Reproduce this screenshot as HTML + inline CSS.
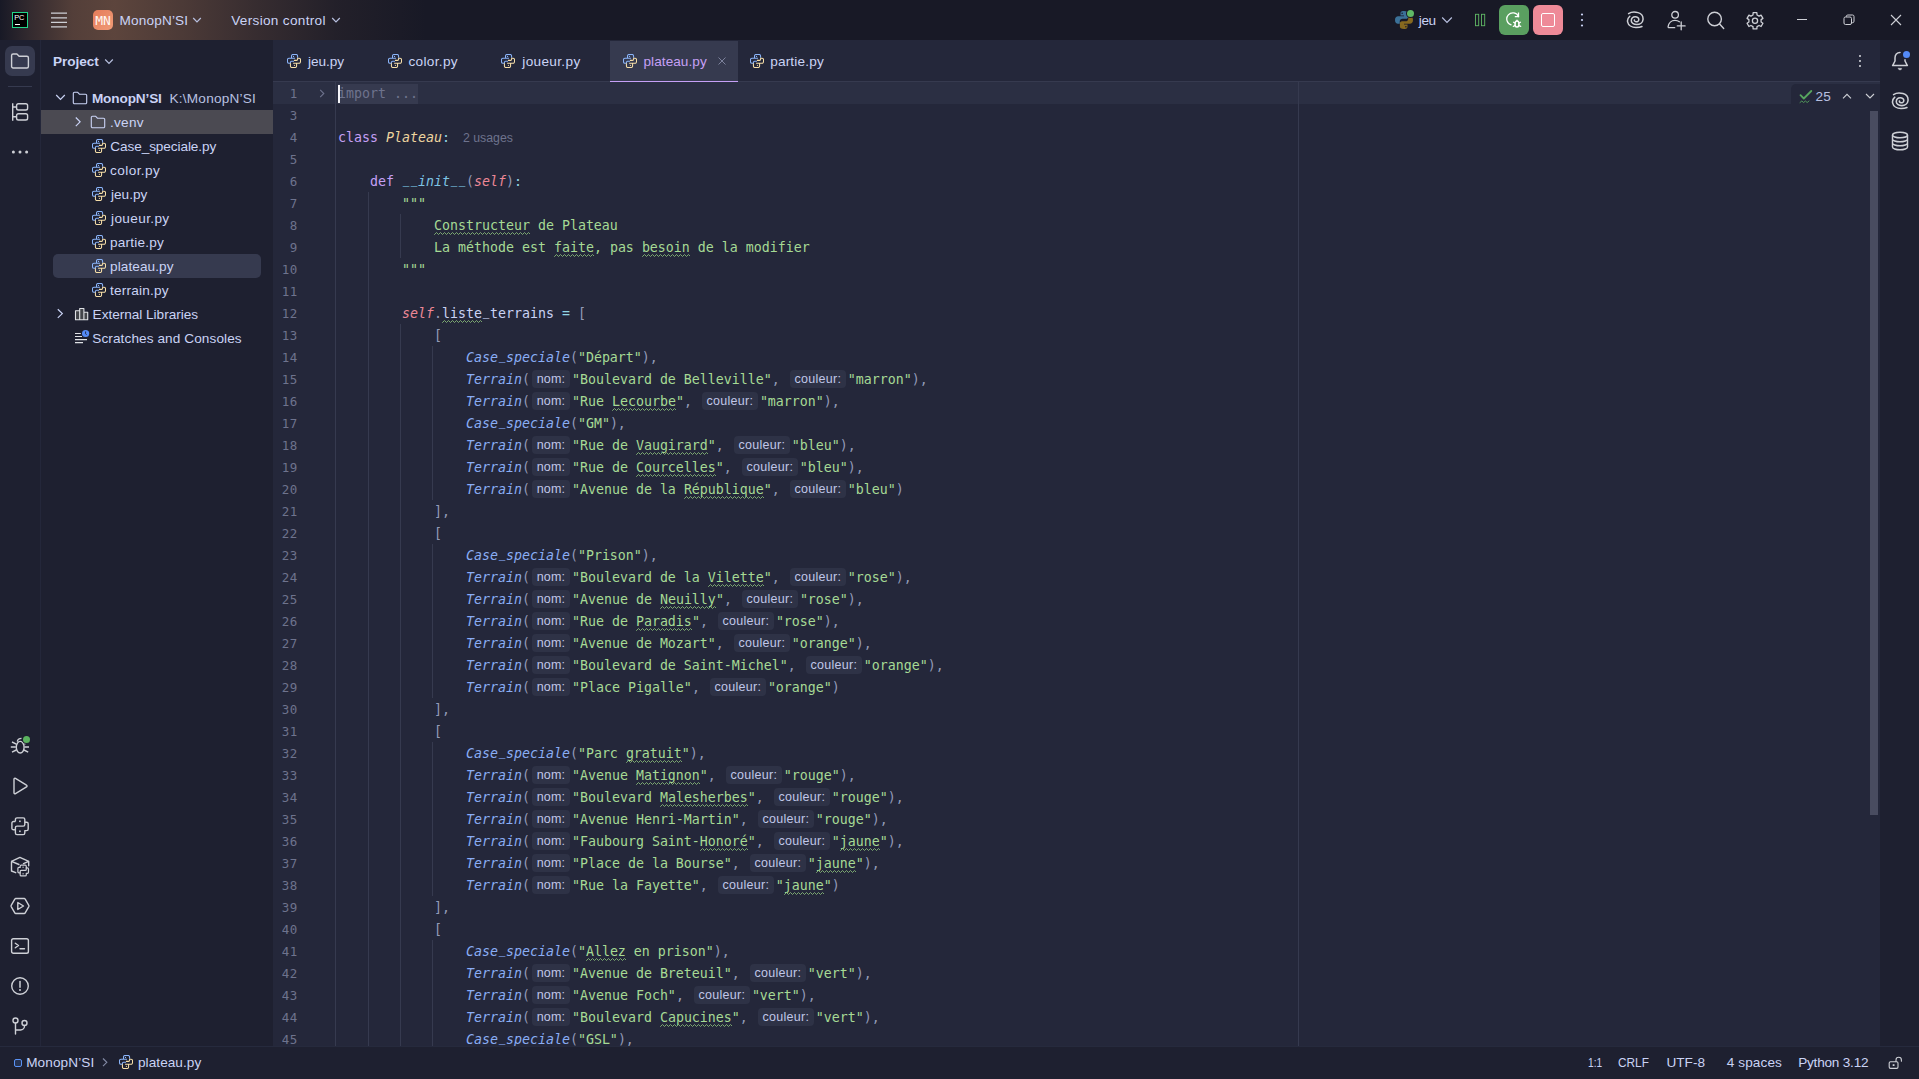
<!DOCTYPE html>
<html lang="fr"><head><meta charset="utf-8"><title>MonopN'SI – plateau.py</title>
<style>
*{box-sizing:border-box;margin:0;padding:0}
html,body{width:1919px;height:1079px;overflow:hidden;background:#24273a}
body{position:relative;font-family:"Liberation Sans",sans-serif;color:#cad3f5;font-size:13.5px}
.abs,.ic,.tx{position:absolute}
.tx{white-space:nowrap;line-height:24px;color:#cad3f5;padding-top:1px}
#title{position:absolute;left:0;top:0;width:1919px;height:40px;background:#181926}
#title .glow{position:absolute;left:0;top:0;width:520px;height:40px;background:linear-gradient(90deg,rgba(98,72,62,0) 0,rgba(98,72,62,.38) 6%,rgba(98,72,62,.8) 14%,rgba(98,72,62,.93) 22%,rgba(98,72,62,.7) 35%,rgba(98,72,62,.4) 50%,rgba(98,72,62,.14) 65%,rgba(98,72,62,0) 82%)}
#lstrip{position:absolute;left:0;top:40px;width:41px;height:1007px;background:#1e2030;border-right:1px solid #24273a}
#proj{position:absolute;left:41px;top:40px;width:232px;height:1007px;background:#1e2030}
#rstrip{position:absolute;left:1880px;top:40px;width:39px;height:1007px;background:#1e2030}
#status{position:absolute;left:0;top:1047px;width:1919px;height:32px;background:#1e2030}
#editor{position:absolute;left:273px;top:40px;width:1607px;height:1007px;background:#24273a}
#tabline{position:absolute;left:273px;top:81px;width:1607px;height:1px;background:#363a4f}
#code{position:absolute;left:273px;top:82px;width:1607px;height:965px;overflow:hidden;font-family:"DejaVu Sans Mono","Liberation Mono",monospace;font-size:13.29px}
.ln{position:absolute;left:0;width:1607px;height:22px;line-height:22px;white-space:pre}
.ln.cur{background:#2b2f43}
.no{position:absolute;left:1px;top:1px;width:23.7px;text-align:right;color:#6e738d;font-size:12.5px;letter-spacing:.47px}
.cd{position:absolute;left:65px;top:1px;color:#cad3f5}
.k{color:#c6a0f6}.p{color:#939ab7}.s{color:#a6da95}.f{color:#8aadf4;font-style:italic}
.c{color:#eed49f;font-style:italic}.self{color:#ed8796;font-style:italic}.o{color:#91d7e3}.d{color:#7dc4e4;font-style:italic}.t{color:#cad3f5}
.w{position:relative;display:inline-block;height:22px;vertical-align:top}
.w svg{position:absolute;left:0;top:17px;width:100%;height:3px;overflow:hidden}
.h{display:inline-block;font-family:"Liberation Sans",sans-serif;font-size:12.5px;font-style:normal;color:#c0c7e8;background:#2e3246;border-radius:4px;height:18px;line-height:18px;padding:0;margin:0 2px;vertical-align:1px;text-align:center}
.hn{width:38px;letter-spacing:.1px}.hc{width:56px;letter-spacing:.3px}
.u{font-family:"Liberation Sans",sans-serif;font-size:12.3px;color:#6e738d;margin-left:13px}
.fold{display:inline-block;position:relative;background:#363a4f;color:#6e738d;height:20px;line-height:20px;padding-right:0;width:80px}
.caret{position:absolute;left:0;top:1px;width:2px;height:18px;background:#f4f4f8}
.us{display:inline-block;transform:translateY(-3px) scaleX(.82)}
.guide{position:absolute;width:1px;background:#363a4f}
.selrow{position:absolute;left:53px;width:208px;height:24px;border-radius:5px;background:#363a4f}
.tree{font-size:13.6px}
.tab{font-size:13.6px;color:#cad3f5}
.tab.act{color:#c6a0f6}
.b{font-weight:bold}
</style></head><body>
<svg width="0" height="0" style="position:absolute"><defs><pattern id="zz" width="4" height="3" patternUnits="userSpaceOnUse"><path d="M-1.5 .5L.5 2.5L2.5 .5L4.5 2.5L6.5 .5" fill="none" stroke="#86b877" stroke-width=".9"/></pattern></defs></svg>

<div id="title"><div class="glow"></div></div>
<div id="lstrip"></div>
<div id="proj"></div>
<div id="editor"></div>
<div id="rstrip"></div>
<div id="status"></div>

<!-- title bar content -->
<div class="abs" style="left:12px;top:12px;width:16px;height:16px;background:#000;border:1px solid #21d789"></div>
<div id="t1" class="tx" style="left:14.3px;top:12px;font-size:7.400px;line-height:9px;font-weight:normal;color:#fff;letter-spacing:-.35px">PC</div>
<div class="abs" style="left:15px;top:24px;width:5px;height:1px;background:#fff"></div>
<svg class="ic" style="left:50px;top:12px" width="18" height="16" viewBox="0 0 18 16" stroke="#ced0d6" stroke-width="1.300"><path d="M1 1.200h16M1 5.800h16M1 10.300h16M1 14.900h16"/></svg>
<div class="abs" style="left:93px;top:10px;width:20px;height:20px;border-radius:5px;background:linear-gradient(135deg,#e57c5a,#f09b77)"></div>
<div id="t2" class="tx" style="left:93px;top:10px;width:20px;text-align:center;line-height:20px;font-family:'DejaVu Sans Mono','Liberation Mono',monospace;font-size:13px;color:#fff7f2;letter-spacing:0">MN</div>
<div id="t3" class="tx" style="left:119.4px;top:8px;font-size:13.6px;letter-spacing:0.188px">MonopN’SI</div>
<svg class="ic" style="left:192px;top:16px" width="10" height="8" viewBox="0 0 10 8" fill="none" stroke="#b8c0e0" stroke-width="1.2"><path d="M1.2 2l3.8 3.8L8.8 2"/></svg>
<div id="t4" class="tx" style="left:231.25px;top:8px;font-size:13.6px;letter-spacing:0.304px">Version control</div>
<svg class="ic" style="left:331px;top:16px" width="10" height="8" viewBox="0 0 10 8" fill="none" stroke="#b8c0e0" stroke-width="1.2"><path d="M1.2 2l3.8 3.8L8.8 2"/></svg>

<svg class="ic" style="left:1394px;top:10px" width="20" height="20" viewBox="0 0 16 16"><path d="M7.900 .8C5.400 .8 5.200 1.900 5.200 2.800V4.400H8v.6H3.300C1.900 5 .8 6 .8 8s1 3 2.300 3H4.600V9.100c0-1.200 1-2.100 2.200-2.100h2.800c1 0 1.700-.8 1.700-1.700V2.800c0-1-.8-2-3.400-2z" fill="#3b7198"/><path d="M8.100 15.200c2.500 0 2.700-1.100 2.700-2V11.600H8V11h4.700c1.400 0 2.500-1 2.500-3s-1-3-2.300-3H11.400v1.900c0 1.200-1 2.100-2.200 2.100H6.400c-1 0-1.700 .8-1.700 1.700v2.500c0 1 .8 2 3.400 2z" fill="#86691f"/><circle cx="6.500" cy="2.600" r=".6" fill="#181926"/><circle cx="9.500" cy="13.400" r=".6" fill="#181926"/></svg>
<div class="abs" style="left:1406px;top:9px;width:9px;height:9px;border-radius:50%;background:#181926"></div><div class="abs" style="left:1407px;top:10px;width:7px;height:7px;border-radius:50%;background:#5fb865"></div>
<div id="t5" class="tx" style="left:1418.8px;top:8px;font-size:13.6px;letter-spacing:-0.400px">jeu</div>
<svg class="ic" style="left:1441px;top:16px" width="12" height="8" viewBox="0 0 12 8" fill="none" stroke="#b8c0e0" stroke-width="1.2"><path d="M1.2 1.5l4.8 4.8 4.8-4.8"/></svg>
<svg class="ic" style="left:1474px;top:13px" width="12" height="14" viewBox="0 0 12 14" fill="none" stroke="#5fb865" stroke-width=".9"><rect x="1.500" y="1.300" width="3.200" height="11.400"/><rect x="7.500" y="1.300" width="3.200" height="11.400"/></svg>
<div class="abs" style="left:1499px;top:5px;width:30px;height:30px;border-radius:6px;background:#5a9f60"></div>
<svg class="ic" style="left:1506px;top:12px" width="17" height="18" viewBox="0 0 17 18" fill="none" stroke="#fff" stroke-width="1.300" stroke-linecap="round"><path d="M12.500 4.600A6.100 6.100 0 1 0 5.100 12.800"/><path d="M12.500 .5V4.600H8.800" stroke-linecap="butt"/><ellipse cx="11" cy="12" rx="2" ry="3.100" stroke-width="1.500"/><path d="M11 8.800v-.8M7.500 10.200l2 .9M7.300 14.400l2.200-1.100M14.500 10.200l-2 .9M14.700 14.400l-2.200-1.100" stroke-width="1.200"/></svg>
<div class="abs" style="left:1533px;top:5px;width:30px;height:30px;border-radius:6px;background:#ee8a98"></div>
<div class="abs" style="left:1541px;top:13px;width:14px;height:14px;border-radius:2px;border:1.5px solid #fff"></div>
<svg class="ic" style="left:1580px;top:12px" width="4" height="16" viewBox="0 0 4 16" fill="#cad3f5"><circle cx="2" cy="2.5" r="1.1"/><circle cx="2" cy="8" r="1.1"/><circle cx="2" cy="13.5" r="1.1"/></svg>


<!-- AI spiral (title) -->
<svg class="ic" style="left:1626px;top:11px" width="18" height="18" viewBox="0 0 18 18" fill="none" stroke="#ced0d6" stroke-width="1.500" stroke-linecap="round"><path d="M2.600 2.600C5 1 9 .8 12 1.600C15.500 2.600 17.300 5.500 17 8.600C16.700 11.500 14 13.600 10.800 13.600C7.500 13.600 5.200 11.800 5.300 9.600C5.400 7.400 7.200 5.800 9.300 5.800C11.400 5.800 12.900 7.100 12.800 8.700C12.700 10.200 11.300 11 10 10.800C8.900 10.600 8.200 9.800 8.400 9M3.800 5.200C2.200 6.600 1.200 8.600 1.600 10.800C2.200 14.200 5.800 16.400 10 16.500C12.500 16.500 14.500 16.200 16 15.500"/></svg>
<!-- add user -->
<svg class="ic" style="left:1666px;top:10px" width="20" height="21" viewBox="0 0 20 21" fill="none" stroke="#ced0d6" stroke-width="1.300" stroke-linecap="round"><circle cx="9.100" cy="4.800" r="3.300"/><path d="M8.700 17.700H3c-.6 0-1-.5-.9-1.100C2.600 13 5.300 10.300 9 10.300c1.700 0 3.200 .5 4.400 1.400M15.200 12v7.800M11.300 15.900h7.800"/></svg>
<!-- search -->
<svg class="ic" style="left:1706px;top:11px" width="19" height="19" viewBox="0 0 19 19" fill="none" stroke="#ced0d6" stroke-width="1.400" stroke-linecap="round"><circle cx="8.600" cy="8" r="6.800"/><path d="M13.600 13l4.100 4.400"/></svg>
<!-- gear -->
<svg class="ic" style="left:1745px;top:10px" width="20" height="21" viewBox="0 0 20 21" fill="none" stroke="#ced0d6" stroke-width="1.300" stroke-linejoin="round"><path d="M8.13 2.71L11.87 2.71L12.02 4.94L14.07 6.12L16.07 5.14L17.94 8.37L16.09 9.62L16.09 11.98L17.94 13.23L16.07 16.46L14.07 15.48L12.02 16.66L11.87 18.89L8.13 18.89L7.98 16.66L5.93 15.48L3.93 16.46L2.06 13.23L3.91 11.98L3.91 9.62L2.06 8.37L3.93 5.14L5.93 6.12L7.98 4.94z"/><circle cx="10" cy="10.800" r="2.600"/></svg>
<!-- window controls -->
<div class="abs" style="left:1797px;top:19px;width:10px;height:1px;background:#ced0d6"></div>
<svg class="ic" style="left:1843px;top:14px" width="12" height="12" viewBox="0 0 12 12" fill="none" stroke="#ced0d6" stroke-width="1"><rect x="1" y="3" width="7.500" height="7.500" rx="1.500"/><path d="M3.300 3V2.500A1.500 1.500 0 0 1 4.800 1H9.500A1.500 1.500 0 0 1 11 2.500V7.200A1.500 1.500 0 0 1 9.500 8.700H8.700"/></svg>
<svg class="ic" style="left:1890px;top:14px" width="12" height="12" viewBox="0 0 12 12" fill="none" stroke="#ced0d6" stroke-width="1.100"><path d="M1 1l10 10M11 1L1 11"/></svg>

<!-- right strip -->
<svg class="ic" style="left:1890px;top:50px" width="20" height="21" viewBox="0 0 20 21" fill="none" stroke="#ced0d6" stroke-width="1.500" stroke-linecap="round" stroke-linejoin="round"><path d="M10 2.400C6.900 2.400 5 4.700 5 7.700V11L2.600 15.600H17.400L15 11V9.800"/><path d="M8.300 18.300h3.400a1.700 1.700 0 0 1-3.400 0z" fill="#ced0d6" stroke-width=".4"/></svg>
<div class="abs" style="left:1903px;top:51px;width:7px;height:7px;border-radius:50%;background:#548af7"></div>
<svg class="ic" style="left:1891px;top:92px" width="18" height="18" viewBox="0 0 18 18" fill="none" stroke="#ced0d6" stroke-width="1.550" stroke-linecap="round"><path d="M2.600 2.600C5 1 9 .8 12 1.600C15.500 2.600 17.300 5.500 17 8.600C16.700 11.500 14 13.600 10.800 13.600C7.500 13.600 5.200 11.800 5.300 9.600C5.400 7.400 7.200 5.800 9.300 5.800C11.400 5.800 12.900 7.100 12.800 8.700C12.700 10.200 11.300 11 10 10.800C8.900 10.600 8.200 9.800 8.400 9M3.800 5.200C2.200 6.600 1.200 8.600 1.600 10.800C2.200 14.200 5.800 16.400 10 16.500C12.500 16.500 14.500 16.200 16 15.500"/></svg>
<svg class="ic" style="left:1891px;top:131px" width="18" height="20" viewBox="0 0 18 20" fill="none" stroke="#ced0d6" stroke-width="1.450"><ellipse cx="9" cy="4" rx="7.500" ry="2.800"/><path d="M1.500 4v12c0 1.500 3.400 2.800 7.500 2.800s7.500-1.300 7.500-2.800V4M1.500 8c0 1.500 3.400 2.800 7.500 2.800s7.500-1.300 7.500-2.800M1.500 12c0 1.500 3.400 2.800 7.500 2.800s7.500-1.300 7.500-2.800"/></svg>

<!-- tab bar kebab + close -->
<svg class="ic" style="left:1858px;top:53px" width="4" height="16" viewBox="0 0 4 16" fill="#ced0d6"><circle cx="2" cy="3" r="1.050"/><circle cx="2" cy="8" r="1.050"/><circle cx="2" cy="13" r="1.050"/></svg>

<!-- status bar misc -->
<svg class="ic" style="left:101px;top:1057px" width="8" height="11" viewBox="0 0 8 11" fill="none" stroke="#8087a2" stroke-width="1.200"><path d="M2 1.500l3.800 3.800L2 9.100"/></svg>
<svg class="ic" style="left:1888px;top:1056px" width="15" height="14" viewBox="0 0 15 14" fill="none" stroke="#ced0d6" stroke-width="1.100" stroke-linecap="round"><rect x="1.200" y="5.800" width="8.800" height="6.600" rx="1.300"/><path d="M8 5.600V4a2.700 2.700 0 0 1 5.400 0v1.300"/><rect x="4.700" y="8.200" width="1.800" height="1.800" fill="#ced0d6" stroke="none"/></svg>

<!-- left strip -->
<div class="abs" style="left:5px;top:46px;width:30px;height:30px;border-radius:7px;background:#363a4f"></div>
<svg class="ic" style="left:10px;top:52px" width="20" height="18" viewBox="0 0 20 18" fill="none" stroke="#ced0d6" stroke-width="1.400" stroke-linejoin="round"><path d="M1.6 3.5a1.5 1.5 0 0 1 1.5-1.5h3.8l2.2 2.3h7.8a1.5 1.5 0 0 1 1.5 1.5v8.700a1.5 1.5 0 0 1-1.5 1.500H3.100a1.500 1.500 0 0 1-1.500-1.500z"/></svg>
<div class="abs" style="left:8px;top:86px;width:24px;height:1px;background:#363a4f"></div>


<!-- structure -->
<svg class="ic" style="left:11px;top:102px" width="18" height="20" viewBox="0 0 18 20" fill="none" stroke="#ced0d6" stroke-width="1.400"><path d="M1.700 1.200V18.800M1.700 5H5.300M1.700 14.800H5.300"/><rect x="5.600" y="1.800" width="11" height="6.200" rx="1.800"/><rect x="5.600" y="11.800" width="11" height="6.200" rx="1.800"/></svg>
<svg class="ic" style="left:11px;top:149px" width="18" height="6" viewBox="0 0 18 6" fill="#ced0d6"><circle cx="2.400" cy="3" r="1.500"/><circle cx="9" cy="3" r="1.500"/><circle cx="15.600" cy="3" r="1.500"/></svg>
<!-- debug -->
<svg class="ic" style="left:10px;top:736px" width="20" height="20" viewBox="0 0 20 20" fill="none" stroke="#ced0d6" stroke-width="1.400" stroke-linecap="butt"><ellipse cx="10.200" cy="11.200" rx="3.900" ry="5.800"/><path d="M7.400 5.800C7.400 3.700 9 2.400 11.500 2.400M5.800 11H.8M14.600 11H19M2 6l4.300 2.100M2 16.100l4.300-2.100M18.200 16.100l-4.300-2.100M18 6.200l-3.700 1.900"/></svg>
<div class="abs" style="left:21.800px;top:734.800px;width:9.200px;height:9.200px;border-radius:50%;background:#1e2030"></div><div class="abs" style="left:22.800px;top:735.800px;width:7.200px;height:7.200px;border-radius:50%;background:#5bb35f"></div>
<!-- run -->
<svg class="ic" style="left:10px;top:776px" width="20" height="20" viewBox="0 0 20 20" fill="none" stroke="#ced0d6" stroke-width="1.400" stroke-linejoin="round"><path d="M4 3.200c0-.8 .8-1.200 1.500-.8l11 6.700c.7 .4 .7 1.400 0 1.800l-11 6.700c-.7 .4-1.500 0-1.500-.8z"/></svg>
<!-- python console -->
<svg class="ic" style="left:11px;top:817px" width="18" height="18.500" viewBox="0 0 18 18.500" fill="none" stroke="#ced0d6" stroke-width="1.400" stroke-linejoin="round"><path d="M4.400 4.500V2.500A1.600 1.600 0 0 1 6 .9H12.200A1.600 1.600 0 0 1 13.800 2.500V5.200H15.600A1.600 1.600 0 0 1 17.200 6.800V12A1.600 1.600 0 0 1 15.600 13.600H13.800V16A1.600 1.600 0 0 1 12.200 17.600H6A1.600 1.600 0 0 1 4.400 16V12.800H2.500A1.600 1.600 0 0 1 .9 11.200V6.100A1.600 1.600 0 0 1 2.500 4.500H4.400"/><path d="M13.800 5.200V7.500A1.600 1.600 0 0 1 12.200 9.100H6A1.600 1.600 0 0 0 4.400 10.700V12.800"/><rect x="8.100" y="3.500" width="1.600" height="1.600" fill="#ced0d6" stroke="none"/><rect x="8.100" y="13.500" width="1.600" height="1.600" fill="#ced0d6" stroke="none"/></svg>
<!-- python packages -->
<svg class="ic" style="left:10px;top:856px" width="20" height="21" viewBox="0 0 20 21" fill="none" stroke="#ced0d6" stroke-width="1.400" stroke-linejoin="round" stroke-linecap="round"><path d="M5.700 16.700L1.500 15V5.300L9.900 1.400L18.700 5.300V9.800M1.500 5.300L8.900 8.500M18.700 5.300L13.500 7.600"/><g transform="translate(7.300 8.500) scale(.65)" stroke-width="1.850"><path d="M4.400 4.500V2.500A1.600 1.600 0 0 1 6 .9H12.200A1.600 1.600 0 0 1 13.800 2.500V5.200H15.600A1.600 1.600 0 0 1 17.200 6.800V12A1.600 1.600 0 0 1 15.600 13.600H13.800V16A1.600 1.600 0 0 1 12.200 17.600H6A1.600 1.600 0 0 1 4.400 16V12.800H2.500A1.600 1.600 0 0 1 .9 11.200V6.100A1.600 1.600 0 0 1 2.500 4.500H4.400"/><path d="M13.800 5.200V7.500A1.600 1.600 0 0 1 12.200 9.100H6A1.600 1.600 0 0 0 4.400 10.700V12.800"/><rect x="8" y="3.300" width="1.800" height="1.800" fill="#ced0d6" stroke="none"/><rect x="8" y="13.400" width="1.800" height="1.800" fill="#ced0d6" stroke="none"/></g></svg>
<!-- services -->
<svg class="ic" style="left:10px;top:896px" width="20" height="20" viewBox="0 0 20 20" fill="none" stroke="#ced0d6" stroke-width="1.400" stroke-linejoin="round"><path d="M5.800 2.500h8.400c.4 0 .8 .2 1 .6l3.600 6.300c.2 .4 .2 .8 0 1.200l-3.600 6.300c-.2 .4-.6 .6-1 .6H5.800c-.4 0-.8-.2-1-.6L1.200 10.600c-.2-.4-.2-.8 0-1.200l3.600-6.300c.2-.4 .6-.6 1-.6z"/><path d="M7.800 6.500v7l5.700-3.500z"/></svg>
<!-- terminal -->
<svg class="ic" style="left:10px;top:936px" width="20" height="20" viewBox="0 0 20 20" fill="none" stroke="#ced0d6" stroke-width="1.400" stroke-linecap="round" stroke-linejoin="round"><rect x="1.600" y="2.800" width="16.800" height="14.400" rx="1.800"/><path d="M5.300 7.200l3.200 2.300-3.200 2.300M10 12.800h4.500"/></svg>
<!-- problems -->
<svg class="ic" style="left:10px;top:976px" width="20" height="20" viewBox="0 0 20 20" fill="none" stroke="#ced0d6" stroke-width="1.400" stroke-linecap="round"><circle cx="10" cy="10" r="8.300"/><path d="M10 5.500v5.700" stroke-width="1.500"/><circle cx="10" cy="14" r="1" fill="#ced0d6" stroke="none"/></svg>
<!-- git -->
<svg class="ic" style="left:10px;top:1016px" width="20" height="20" viewBox="0 0 20 20" fill="none" stroke="#ced0d6" stroke-width="1.400" stroke-linecap="round"><circle cx="5.500" cy="4.500" r="2.500"/><circle cx="14.500" cy="7" r="2.500"/><path d="M5.500 7v11M5.500 14h5a4 4 0 0 0 4-4V9.500"/></svg>

<!-- project panel -->
<div id="t6" class="tx b" style="left:53px;top:49px;font-size:13.6px;letter-spacing:-0.042px">Project</div>
<svg class="ic" style="left:104px;top:58px" width="10" height="8" viewBox="0 0 10 8" fill="none" stroke="#b8c0e0" stroke-width="1.2"><path d="M1.2 1.5l3.8 3.8L8.8 1.500"/></svg>
<div class="abs" style="left:41px;top:110px;width:232px;height:24px;background:#4b4a52"></div>
<div id="t7" class="tx b tree" style="left:91.9px;top:86px;letter-spacing:-0.125px">MonopN’SI</div>
<div id="t8" class="tx tree" style="left:169.5px;top:86px;color:#b8c0e0;letter-spacing:0.227px">K:\MonopN’SI</div>
<div id="t9" class="tx tree" style="left:110px;top:110px;letter-spacing:0.250px">.venv</div>

<svg class="ic" style="left:55px;top:93px" width="11" height="9" viewBox="0 0 11 9" fill="none" stroke="#cad3f5" stroke-width="1.200"><path d="M1.200 2l4.300 4.300L9.800 2"/></svg>
<svg class="ic" style="left:72px;top:91px" width="16" height="14" viewBox="0 0 16 14" fill="none" stroke="#cad3f5" stroke-width="1.100" stroke-linejoin="round"><path d="M1.300 2.500A1.200 1.200 0 0 1 2.500 1.300h3.200l1.700 1.900h6.100a1.200 1.200 0 0 1 1.200 1.200v7.100a1.200 1.200 0 0 1-1.200 1.200H2.500a1.200 1.200 0 0 1-1.200-1.200z"/></svg>
<svg class="ic" style="left:74px;top:116px" width="8" height="12" viewBox="0 0 8 12" fill="none" stroke="#cad3f5" stroke-width="1.200"><path d="M1.800 1.500l4.300 4.300L1.800 10.100"/></svg>
<svg class="ic" style="left:90px;top:115px" width="16" height="14" viewBox="0 0 16 14" fill="none" stroke="#cad3f5" stroke-width="1.100" stroke-linejoin="round"><path d="M1.300 2.500A1.200 1.200 0 0 1 2.500 1.300h3.200l1.700 1.900h6.100a1.200 1.200 0 0 1 1.200 1.200v7.100a1.200 1.200 0 0 1-1.200 1.200H2.500a1.200 1.200 0 0 1-1.200-1.200z"/></svg>
<svg class="ic" style="left:56px;top:308px" width="8" height="12" viewBox="0 0 8 12" fill="none" stroke="#cad3f5" stroke-width="1.200"><path d="M1.800 1.300l4.500 4.300L1.800 9.900"/></svg>
<svg class="ic" style="left:74px;top:307px" width="15" height="14" viewBox="0 0 15 14" fill="#43454a" stroke="#dfe1e5" stroke-width="1.100" stroke-linejoin="round"><path d="M1.500 3.700h4.200v9H1.500zM5.700 1.500h4.200v11.200H5.700zM9.900 5.300h3.800v7.400H9.900z"/></svg>
<svg class="ic" style="left:74px;top:329px" width="16" height="15" viewBox="0 0 16 15" fill="none" stroke="#dfe1e5" stroke-width="1.100"><path d="M1 4.500h5.800M1 7.500h7M1 10.600h12M1 13.600h8"/><circle cx="11.600" cy="4.500" r="3.600" fill="#548af7" stroke="none"/><path d="M11.600 2.500v2.300l1 1" stroke="#1e2030" stroke-width=".9"/></svg>
<svg class="ic" style="left:92px;top:139px" width="14" height="14" viewBox="0 0 14 14.100" fill="none" stroke-width="1.05" stroke-linecap="butt" stroke-linejoin="round">
<path d="M8 4.200H1.950A1.500 1.500 0 0 0 .45 5.700V7.900A1.500 1.500 0 0 0 1.950 9.400H3.400V8.500A1.100 1.100 0 0 1 4.500 7.400H7M4.500 4.200V1.950A1.500 1.500 0 0 1 6 .45H9.100A1.500 1.500 0 0 1 10.600 1.950V3.700" stroke="#8bb5fa"/><path d="M6.100 9.300H12.050A1.500 1.500 0 0 0 13.550 7.800V5.700A1.500 1.500 0 0 0 12.050 4.200H10.650V5.300A1.100 1.100 0 0 1 9.550 6.400H7M9.600 9.300V12.150A1.500 1.500 0 0 1 8.100 13.650H4.900A1.500 1.500 0 0 1 3.400 12.150V9.400" stroke="#f7dfa8"/>
<circle cx="6.500" cy="2.500" r=".62" fill="#8bb5fa" stroke="none"/><circle cx="7.450" cy="11.400" r=".62" fill="#f7dfa8" stroke="none"/></svg><div id="t10" class="tx tree" style="left:110.25px;top:134px;letter-spacing:-0.083px">Case_speciale.py</div><svg class="ic" style="left:92px;top:163px" width="14" height="14" viewBox="0 0 14 14.100" fill="none" stroke-width="1.05" stroke-linecap="butt" stroke-linejoin="round">
<path d="M8 4.200H1.950A1.500 1.500 0 0 0 .45 5.700V7.900A1.500 1.500 0 0 0 1.950 9.400H3.400V8.500A1.100 1.100 0 0 1 4.500 7.400H7M4.500 4.200V1.950A1.500 1.500 0 0 1 6 .45H9.100A1.500 1.500 0 0 1 10.600 1.950V3.700" stroke="#8bb5fa"/><path d="M6.100 9.300H12.050A1.500 1.500 0 0 0 13.550 7.800V5.700A1.500 1.500 0 0 0 12.050 4.200H10.650V5.300A1.100 1.100 0 0 1 9.550 6.400H7M9.600 9.300V12.150A1.500 1.500 0 0 1 8.100 13.650H4.900A1.500 1.500 0 0 1 3.400 12.150V9.400" stroke="#f7dfa8"/>
<circle cx="6.500" cy="2.500" r=".62" fill="#8bb5fa" stroke="none"/><circle cx="7.450" cy="11.400" r=".62" fill="#f7dfa8" stroke="none"/></svg><div id="t11" class="tx tree" style="left:110px;top:158px;letter-spacing:0.429px">color.py</div><svg class="ic" style="left:92px;top:187px" width="14" height="14" viewBox="0 0 14 14.100" fill="none" stroke-width="1.05" stroke-linecap="butt" stroke-linejoin="round">
<path d="M8 4.200H1.950A1.500 1.500 0 0 0 .45 5.700V7.900A1.500 1.500 0 0 0 1.950 9.400H3.400V8.500A1.100 1.100 0 0 1 4.500 7.400H7M4.500 4.200V1.950A1.500 1.500 0 0 1 6 .45H9.100A1.500 1.500 0 0 1 10.600 1.950V3.700" stroke="#8bb5fa"/><path d="M6.100 9.300H12.050A1.500 1.500 0 0 0 13.550 7.800V5.700A1.500 1.500 0 0 0 12.050 4.200H10.650V5.300A1.100 1.100 0 0 1 9.550 6.400H7M9.600 9.300V12.150A1.500 1.500 0 0 1 8.100 13.650H4.900A1.500 1.500 0 0 1 3.400 12.150V9.400" stroke="#f7dfa8"/>
<circle cx="6.500" cy="2.500" r=".62" fill="#8bb5fa" stroke="none"/><circle cx="7.450" cy="11.400" r=".62" fill="#f7dfa8" stroke="none"/></svg><div id="t12" class="tx tree" style="left:111px;top:182px;letter-spacing:0.000px">jeu.py</div><svg class="ic" style="left:92px;top:211px" width="14" height="14" viewBox="0 0 14 14.100" fill="none" stroke-width="1.05" stroke-linecap="butt" stroke-linejoin="round">
<path d="M8 4.200H1.950A1.500 1.500 0 0 0 .45 5.700V7.900A1.500 1.500 0 0 0 1.950 9.400H3.400V8.500A1.100 1.100 0 0 1 4.500 7.400H7M4.500 4.200V1.950A1.500 1.500 0 0 1 6 .45H9.100A1.500 1.500 0 0 1 10.600 1.950V3.700" stroke="#8bb5fa"/><path d="M6.100 9.300H12.050A1.500 1.500 0 0 0 13.550 7.800V5.700A1.500 1.500 0 0 0 12.050 4.200H10.650V5.300A1.100 1.100 0 0 1 9.550 6.400H7M9.600 9.300V12.150A1.500 1.500 0 0 1 8.100 13.650H4.900A1.500 1.500 0 0 1 3.400 12.150V9.400" stroke="#f7dfa8"/>
<circle cx="6.500" cy="2.500" r=".62" fill="#8bb5fa" stroke="none"/><circle cx="7.450" cy="11.400" r=".62" fill="#f7dfa8" stroke="none"/></svg><div id="t13" class="tx tree" style="left:111px;top:206px;letter-spacing:0.375px">joueur.py</div><svg class="ic" style="left:92px;top:235px" width="14" height="14" viewBox="0 0 14 14.100" fill="none" stroke-width="1.05" stroke-linecap="butt" stroke-linejoin="round">
<path d="M8 4.200H1.950A1.500 1.500 0 0 0 .45 5.700V7.900A1.500 1.500 0 0 0 1.950 9.400H3.400V8.500A1.100 1.100 0 0 1 4.500 7.400H7M4.500 4.200V1.950A1.500 1.500 0 0 1 6 .45H9.100A1.500 1.500 0 0 1 10.600 1.950V3.700" stroke="#8bb5fa"/><path d="M6.100 9.300H12.050A1.500 1.500 0 0 0 13.550 7.800V5.700A1.500 1.500 0 0 0 12.050 4.200H10.650V5.300A1.100 1.100 0 0 1 9.550 6.400H7M9.600 9.300V12.150A1.500 1.500 0 0 1 8.100 13.650H4.900A1.500 1.500 0 0 1 3.400 12.150V9.400" stroke="#f7dfa8"/>
<circle cx="6.500" cy="2.500" r=".62" fill="#8bb5fa" stroke="none"/><circle cx="7.450" cy="11.400" r=".62" fill="#f7dfa8" stroke="none"/></svg><div id="t14" class="tx tree" style="left:110px;top:230px;letter-spacing:0.219px">partie.py</div><div class="selrow" style="top:254px"></div><svg class="ic" style="left:92px;top:259px" width="14" height="14" viewBox="0 0 14 14.100" fill="none" stroke-width="1.05" stroke-linecap="butt" stroke-linejoin="round">
<path d="M8 4.200H1.950A1.500 1.500 0 0 0 .45 5.700V7.900A1.500 1.500 0 0 0 1.950 9.400H3.400V8.500A1.100 1.100 0 0 1 4.500 7.400H7M4.500 4.200V1.950A1.500 1.500 0 0 1 6 .45H9.100A1.500 1.500 0 0 1 10.600 1.950V3.700" stroke="#8bb5fa"/><path d="M6.100 9.300H12.050A1.500 1.500 0 0 0 13.550 7.800V5.700A1.500 1.500 0 0 0 12.050 4.200H10.650V5.300A1.100 1.100 0 0 1 9.550 6.400H7M9.600 9.300V12.150A1.500 1.500 0 0 1 8.100 13.650H4.900A1.500 1.500 0 0 1 3.400 12.150V9.400" stroke="#f7dfa8"/>
<circle cx="6.500" cy="2.500" r=".62" fill="#8bb5fa" stroke="none"/><circle cx="7.450" cy="11.400" r=".62" fill="#f7dfa8" stroke="none"/></svg><div id="t15" class="tx tree" style="left:110px;top:254px;letter-spacing:0.083px">plateau.py</div><svg class="ic" style="left:92px;top:283px" width="14" height="14" viewBox="0 0 14 14.100" fill="none" stroke-width="1.05" stroke-linecap="butt" stroke-linejoin="round">
<path d="M8 4.200H1.950A1.500 1.500 0 0 0 .45 5.700V7.900A1.500 1.500 0 0 0 1.950 9.400H3.400V8.500A1.100 1.100 0 0 1 4.500 7.400H7M4.500 4.200V1.950A1.500 1.500 0 0 1 6 .45H9.100A1.500 1.500 0 0 1 10.600 1.950V3.700" stroke="#8bb5fa"/><path d="M6.100 9.300H12.050A1.500 1.500 0 0 0 13.550 7.800V5.700A1.500 1.500 0 0 0 12.050 4.200H10.650V5.300A1.100 1.100 0 0 1 9.550 6.400H7M9.600 9.300V12.150A1.500 1.500 0 0 1 8.100 13.650H4.900A1.500 1.500 0 0 1 3.400 12.150V9.400" stroke="#f7dfa8"/>
<circle cx="6.500" cy="2.500" r=".62" fill="#8bb5fa" stroke="none"/><circle cx="7.450" cy="11.400" r=".62" fill="#f7dfa8" stroke="none"/></svg><div id="t16" class="tx tree" style="left:110px;top:278px;letter-spacing:0.222px">terrain.py</div>
<div id="t17" class="tx tree" style="left:92.6px;top:302px;letter-spacing:-0.021px">External Libraries</div>
<div id="t18" class="tx tree" style="left:92.3px;top:326px;letter-spacing:0.093px">Scratches and Consoles</div>

<!-- tabs -->
<div class="abs" style="left:610px;top:41px;width:128px;height:40px;background:#363a4f"></div>

<svg class="ic" style="left:287px;top:54px" width="14" height="14" viewBox="0 0 14 14.100" fill="none" stroke-width="1.05" stroke-linecap="butt" stroke-linejoin="round">
<path d="M8 4.200H1.950A1.500 1.500 0 0 0 .45 5.700V7.900A1.500 1.500 0 0 0 1.950 9.400H3.400V8.500A1.100 1.100 0 0 1 4.500 7.400H7M4.500 4.200V1.950A1.500 1.500 0 0 1 6 .45H9.100A1.500 1.500 0 0 1 10.600 1.950V3.700" stroke="#8bb5fa"/><path d="M6.100 9.300H12.050A1.500 1.500 0 0 0 13.550 7.800V5.700A1.500 1.500 0 0 0 12.050 4.200H10.650V5.300A1.100 1.100 0 0 1 9.550 6.400H7M9.600 9.300V12.150A1.500 1.500 0 0 1 8.100 13.650H4.900A1.500 1.500 0 0 1 3.400 12.150V9.400" stroke="#f7dfa8"/>
<circle cx="6.500" cy="2.500" r=".62" fill="#8bb5fa" stroke="none"/><circle cx="7.450" cy="11.400" r=".62" fill="#f7dfa8" stroke="none"/></svg><div id="t19" class="tx tab" style="left:308px;top:49px;letter-spacing:-0.040px">jeu.py</div><svg class="ic" style="left:388px;top:54px" width="14" height="14" viewBox="0 0 14 14.100" fill="none" stroke-width="1.05" stroke-linecap="butt" stroke-linejoin="round">
<path d="M8 4.200H1.950A1.500 1.500 0 0 0 .45 5.700V7.900A1.500 1.500 0 0 0 1.950 9.400H3.400V8.500A1.100 1.100 0 0 1 4.500 7.400H7M4.500 4.200V1.950A1.500 1.500 0 0 1 6 .45H9.100A1.500 1.500 0 0 1 10.600 1.950V3.700" stroke="#8bb5fa"/><path d="M6.100 9.300H12.050A1.500 1.500 0 0 0 13.550 7.800V5.700A1.500 1.500 0 0 0 12.050 4.200H10.650V5.300A1.100 1.100 0 0 1 9.550 6.400H7M9.600 9.300V12.150A1.500 1.500 0 0 1 8.100 13.650H4.900A1.500 1.500 0 0 1 3.400 12.150V9.400" stroke="#f7dfa8"/>
<circle cx="6.500" cy="2.500" r=".62" fill="#8bb5fa" stroke="none"/><circle cx="7.450" cy="11.400" r=".62" fill="#f7dfa8" stroke="none"/></svg><div id="t20" class="tx tab" style="left:408.4px;top:49px;letter-spacing:0.343px">color.py</div><svg class="ic" style="left:501px;top:54px" width="14" height="14" viewBox="0 0 14 14.100" fill="none" stroke-width="1.05" stroke-linecap="butt" stroke-linejoin="round">
<path d="M8 4.200H1.950A1.500 1.500 0 0 0 .45 5.700V7.900A1.500 1.500 0 0 0 1.950 9.400H3.400V8.500A1.100 1.100 0 0 1 4.500 7.400H7M4.500 4.200V1.950A1.500 1.500 0 0 1 6 .45H9.100A1.500 1.500 0 0 1 10.600 1.950V3.700" stroke="#8bb5fa"/><path d="M6.100 9.300H12.050A1.500 1.500 0 0 0 13.550 7.800V5.700A1.500 1.500 0 0 0 12.050 4.200H10.650V5.300A1.100 1.100 0 0 1 9.550 6.400H7M9.600 9.300V12.150A1.500 1.500 0 0 1 8.100 13.650H4.900A1.500 1.500 0 0 1 3.400 12.150V9.400" stroke="#f7dfa8"/>
<circle cx="6.500" cy="2.500" r=".62" fill="#8bb5fa" stroke="none"/><circle cx="7.450" cy="11.400" r=".62" fill="#f7dfa8" stroke="none"/></svg><div id="t21" class="tx tab" style="left:522.3px;top:49px;letter-spacing:0.338px">joueur.py</div><svg class="ic" style="left:623px;top:54px" width="14" height="14" viewBox="0 0 14 14.100" fill="none" stroke-width="1.05" stroke-linecap="butt" stroke-linejoin="round">
<path d="M8 4.200H1.950A1.500 1.500 0 0 0 .45 5.700V7.900A1.500 1.500 0 0 0 1.950 9.400H3.400V8.500A1.100 1.100 0 0 1 4.500 7.400H7M4.500 4.200V1.950A1.500 1.500 0 0 1 6 .45H9.100A1.500 1.500 0 0 1 10.600 1.950V3.700" stroke="#8bb5fa"/><path d="M6.100 9.300H12.050A1.500 1.500 0 0 0 13.550 7.800V5.700A1.500 1.500 0 0 0 12.050 4.200H10.650V5.300A1.100 1.100 0 0 1 9.550 6.400H7M9.600 9.300V12.150A1.500 1.500 0 0 1 8.100 13.650H4.900A1.500 1.500 0 0 1 3.400 12.150V9.400" stroke="#f7dfa8"/>
<circle cx="6.500" cy="2.500" r=".62" fill="#8bb5fa" stroke="none"/><circle cx="7.450" cy="11.400" r=".62" fill="#f7dfa8" stroke="none"/></svg><div id="t22" class="tx tab act" style="left:643.5px;top:49px;letter-spacing:0.056px">plateau.py</div><svg class="ic" style="left:750px;top:54px" width="14" height="14" viewBox="0 0 14 14.100" fill="none" stroke-width="1.05" stroke-linecap="butt" stroke-linejoin="round">
<path d="M8 4.200H1.950A1.500 1.500 0 0 0 .45 5.700V7.900A1.500 1.500 0 0 0 1.950 9.400H3.400V8.500A1.100 1.100 0 0 1 4.500 7.400H7M4.500 4.200V1.950A1.500 1.500 0 0 1 6 .45H9.100A1.500 1.500 0 0 1 10.600 1.950V3.700" stroke="#8bb5fa"/><path d="M6.100 9.300H12.050A1.500 1.500 0 0 0 13.550 7.800V5.700A1.500 1.500 0 0 0 12.050 4.200H10.650V5.300A1.100 1.100 0 0 1 9.550 6.400H7M9.600 9.300V12.150A1.500 1.500 0 0 1 8.100 13.650H4.900A1.500 1.500 0 0 1 3.400 12.150V9.400" stroke="#f7dfa8"/>
<circle cx="6.500" cy="2.500" r=".62" fill="#8bb5fa" stroke="none"/><circle cx="7.450" cy="11.400" r=".62" fill="#f7dfa8" stroke="none"/></svg><div id="t23" class="tx tab" style="left:770.2px;top:49px;letter-spacing:0.175px">partie.py</div>
<div id="tabline"></div>
<div class="abs" style="left:610px;top:81px;width:128px;height:1px;background:#c6a0f6"></div>
<svg class="ic" style="left:717px;top:56px" width="10" height="10" viewBox="0 0 10 10" fill="none" stroke="#7c819b" stroke-width="1"><path d="M1.500 1.500l7 7M8.500 1.500l-7 7"/></svg>

<!-- editor -->
<div id="code">
<div class="ln cur" style="top:0px"><span class="no">1</span><span class="cd"><span class="fold"><span class="caret"></span>import ...</span></span></div>
<div class="ln" style="top:22px"><span class="no">3</span><span class="cd"></span></div>
<div class="ln" style="top:44px"><span class="no">4</span><span class="cd"><span class="k">class</span> <span class="c">Plateau</span><span class="o">:</span><span class="u">2 usages</span></span></div>
<div class="ln" style="top:66px"><span class="no">5</span><span class="cd"></span></div>
<div class="ln" style="top:88px"><span class="no">6</span><span class="cd">    <span class="k">def</span> <span class="d"><span class="us">_</span><span class="us">_</span>init<span class="us">_</span><span class="us">_</span></span><span class="p">(</span><span class="self">self</span><span class="p">)</span><span class="o">:</span></span></div>
<div class="ln" style="top:110px"><span class="no">7</span><span class="cd">        <span class="s">"""</span></span></div>
<div class="ln" style="top:132px"><span class="no">8</span><span class="cd">            <span class="s"><span class="w">Constructeur<svg><rect width="100%" height="3" fill="url(#zz)"/></svg></span> de Plateau</span></span></div>
<div class="ln" style="top:154px"><span class="no">9</span><span class="cd">            <span class="s">La méthode est <span class="w">faite<svg><rect width="100%" height="3" fill="url(#zz)"/></svg></span>, pas <span class="w">besoin<svg><rect width="100%" height="3" fill="url(#zz)"/></svg></span> de la modifier</span></span></div>
<div class="ln" style="top:176px"><span class="no">10</span><span class="cd">        <span class="s">"""</span></span></div>
<div class="ln" style="top:198px"><span class="no">11</span><span class="cd"></span></div>
<div class="ln" style="top:220px"><span class="no">12</span><span class="cd">        <span class="self">self</span><span class="p">.</span><span class="t"><span class="w">liste<svg><rect width="100%" height="3" fill="url(#zz)"/></svg></span><span class="us">_</span>terrains</span> <span class="o">=</span> <span class="p">[</span></span></div>
<div class="ln" style="top:242px"><span class="no">13</span><span class="cd">            <span class="p">[</span></span></div>
<div class="ln" style="top:264px"><span class="no">14</span><span class="cd">                <span class="f">Case<span class="us">_</span>speciale</span><span class="p">(</span><span class="s">"Départ"</span><span class="p">),</span></span></div>
<div class="ln" style="top:286px"><span class="no">15</span><span class="cd">                <span class="f">Terrain</span><span class="p">(</span><span class="h hn">nom:</span><span class="s">"Boulevard de Belleville"</span><span class="p">,</span> <span class="h hc">couleur:</span><span class="s">"marron"</span><span class="p">),</span></span></div>
<div class="ln" style="top:308px"><span class="no">16</span><span class="cd">                <span class="f">Terrain</span><span class="p">(</span><span class="h hn">nom:</span><span class="s">"Rue <span class="w">Lecourbe<svg><rect width="100%" height="3" fill="url(#zz)"/></svg></span>"</span><span class="p">,</span> <span class="h hc">couleur:</span><span class="s">"marron"</span><span class="p">),</span></span></div>
<div class="ln" style="top:330px"><span class="no">17</span><span class="cd">                <span class="f">Case<span class="us">_</span>speciale</span><span class="p">(</span><span class="s">"GM"</span><span class="p">),</span></span></div>
<div class="ln" style="top:352px"><span class="no">18</span><span class="cd">                <span class="f">Terrain</span><span class="p">(</span><span class="h hn">nom:</span><span class="s">"Rue de <span class="w">Vaugirard<svg><rect width="100%" height="3" fill="url(#zz)"/></svg></span>"</span><span class="p">,</span> <span class="h hc">couleur:</span><span class="s">"bleu"</span><span class="p">),</span></span></div>
<div class="ln" style="top:374px"><span class="no">19</span><span class="cd">                <span class="f">Terrain</span><span class="p">(</span><span class="h hn">nom:</span><span class="s">"Rue de <span class="w">Courcelles<svg><rect width="100%" height="3" fill="url(#zz)"/></svg></span>"</span><span class="p">,</span> <span class="h hc">couleur:</span><span class="s">"bleu"</span><span class="p">),</span></span></div>
<div class="ln" style="top:396px"><span class="no">20</span><span class="cd">                <span class="f">Terrain</span><span class="p">(</span><span class="h hn">nom:</span><span class="s">"Avenue de la <span class="w">République<svg><rect width="100%" height="3" fill="url(#zz)"/></svg></span>"</span><span class="p">,</span> <span class="h hc">couleur:</span><span class="s">"bleu"</span><span class="p">)</span></span></div>
<div class="ln" style="top:418px"><span class="no">21</span><span class="cd">            <span class="p">],</span></span></div>
<div class="ln" style="top:440px"><span class="no">22</span><span class="cd">            <span class="p">[</span></span></div>
<div class="ln" style="top:462px"><span class="no">23</span><span class="cd">                <span class="f">Case<span class="us">_</span>speciale</span><span class="p">(</span><span class="s">"Prison"</span><span class="p">),</span></span></div>
<div class="ln" style="top:484px"><span class="no">24</span><span class="cd">                <span class="f">Terrain</span><span class="p">(</span><span class="h hn">nom:</span><span class="s">"Boulevard de la <span class="w">Vilette<svg><rect width="100%" height="3" fill="url(#zz)"/></svg></span>"</span><span class="p">,</span> <span class="h hc">couleur:</span><span class="s">"rose"</span><span class="p">),</span></span></div>
<div class="ln" style="top:506px"><span class="no">25</span><span class="cd">                <span class="f">Terrain</span><span class="p">(</span><span class="h hn">nom:</span><span class="s">"Avenue de <span class="w">Neuilly<svg><rect width="100%" height="3" fill="url(#zz)"/></svg></span>"</span><span class="p">,</span> <span class="h hc">couleur:</span><span class="s">"rose"</span><span class="p">),</span></span></div>
<div class="ln" style="top:528px"><span class="no">26</span><span class="cd">                <span class="f">Terrain</span><span class="p">(</span><span class="h hn">nom:</span><span class="s">"Rue de <span class="w">Paradis<svg><rect width="100%" height="3" fill="url(#zz)"/></svg></span>"</span><span class="p">,</span> <span class="h hc">couleur:</span><span class="s">"rose"</span><span class="p">),</span></span></div>
<div class="ln" style="top:550px"><span class="no">27</span><span class="cd">                <span class="f">Terrain</span><span class="p">(</span><span class="h hn">nom:</span><span class="s">"Avenue de Mozart"</span><span class="p">,</span> <span class="h hc">couleur:</span><span class="s">"orange"</span><span class="p">),</span></span></div>
<div class="ln" style="top:572px"><span class="no">28</span><span class="cd">                <span class="f">Terrain</span><span class="p">(</span><span class="h hn">nom:</span><span class="s">"Boulevard de Saint-Michel"</span><span class="p">,</span> <span class="h hc">couleur:</span><span class="s">"orange"</span><span class="p">),</span></span></div>
<div class="ln" style="top:594px"><span class="no">29</span><span class="cd">                <span class="f">Terrain</span><span class="p">(</span><span class="h hn">nom:</span><span class="s">"Place Pigalle"</span><span class="p">,</span> <span class="h hc">couleur:</span><span class="s">"orange"</span><span class="p">)</span></span></div>
<div class="ln" style="top:616px"><span class="no">30</span><span class="cd">            <span class="p">],</span></span></div>
<div class="ln" style="top:638px"><span class="no">31</span><span class="cd">            <span class="p">[</span></span></div>
<div class="ln" style="top:660px"><span class="no">32</span><span class="cd">                <span class="f">Case<span class="us">_</span>speciale</span><span class="p">(</span><span class="s">"Parc <span class="w">gratuit<svg><rect width="100%" height="3" fill="url(#zz)"/></svg></span>"</span><span class="p">),</span></span></div>
<div class="ln" style="top:682px"><span class="no">33</span><span class="cd">                <span class="f">Terrain</span><span class="p">(</span><span class="h hn">nom:</span><span class="s">"Avenue <span class="w">Matignon<svg><rect width="100%" height="3" fill="url(#zz)"/></svg></span>"</span><span class="p">,</span> <span class="h hc">couleur:</span><span class="s">"rouge"</span><span class="p">),</span></span></div>
<div class="ln" style="top:704px"><span class="no">34</span><span class="cd">                <span class="f">Terrain</span><span class="p">(</span><span class="h hn">nom:</span><span class="s">"Boulevard <span class="w">Malesherbes<svg><rect width="100%" height="3" fill="url(#zz)"/></svg></span>"</span><span class="p">,</span> <span class="h hc">couleur:</span><span class="s">"rouge"</span><span class="p">),</span></span></div>
<div class="ln" style="top:726px"><span class="no">35</span><span class="cd">                <span class="f">Terrain</span><span class="p">(</span><span class="h hn">nom:</span><span class="s">"Avenue Henri-Martin"</span><span class="p">,</span> <span class="h hc">couleur:</span><span class="s">"rouge"</span><span class="p">),</span></span></div>
<div class="ln" style="top:748px"><span class="no">36</span><span class="cd">                <span class="f">Terrain</span><span class="p">(</span><span class="h hn">nom:</span><span class="s">"Faubourg Saint-<span class="w">Honoré<svg><rect width="100%" height="3" fill="url(#zz)"/></svg></span>"</span><span class="p">,</span> <span class="h hc">couleur:</span><span class="s">"<span class="w">jaune<svg><rect width="100%" height="3" fill="url(#zz)"/></svg></span>"</span><span class="p">),</span></span></div>
<div class="ln" style="top:770px"><span class="no">37</span><span class="cd">                <span class="f">Terrain</span><span class="p">(</span><span class="h hn">nom:</span><span class="s">"Place de la Bourse"</span><span class="p">,</span> <span class="h hc">couleur:</span><span class="s">"<span class="w">jaune<svg><rect width="100%" height="3" fill="url(#zz)"/></svg></span>"</span><span class="p">),</span></span></div>
<div class="ln" style="top:792px"><span class="no">38</span><span class="cd">                <span class="f">Terrain</span><span class="p">(</span><span class="h hn">nom:</span><span class="s">"Rue la Fayette"</span><span class="p">,</span> <span class="h hc">couleur:</span><span class="s">"<span class="w">jaune<svg><rect width="100%" height="3" fill="url(#zz)"/></svg></span>"</span><span class="p">)</span></span></div>
<div class="ln" style="top:814px"><span class="no">39</span><span class="cd">            <span class="p">],</span></span></div>
<div class="ln" style="top:836px"><span class="no">40</span><span class="cd">            <span class="p">[</span></span></div>
<div class="ln" style="top:858px"><span class="no">41</span><span class="cd">                <span class="f">Case<span class="us">_</span>speciale</span><span class="p">(</span><span class="s">"<span class="w">Allez<svg><rect width="100%" height="3" fill="url(#zz)"/></svg></span> en prison"</span><span class="p">),</span></span></div>
<div class="ln" style="top:880px"><span class="no">42</span><span class="cd">                <span class="f">Terrain</span><span class="p">(</span><span class="h hn">nom:</span><span class="s">"Avenue de Breteuil"</span><span class="p">,</span> <span class="h hc">couleur:</span><span class="s">"vert"</span><span class="p">),</span></span></div>
<div class="ln" style="top:902px"><span class="no">43</span><span class="cd">                <span class="f">Terrain</span><span class="p">(</span><span class="h hn">nom:</span><span class="s">"Avenue Foch"</span><span class="p">,</span> <span class="h hc">couleur:</span><span class="s">"vert"</span><span class="p">),</span></span></div>
<div class="ln" style="top:924px"><span class="no">44</span><span class="cd">                <span class="f">Terrain</span><span class="p">(</span><span class="h hn">nom:</span><span class="s">"Boulevard <span class="w">Capucines<svg><rect width="100%" height="3" fill="url(#zz)"/></svg></span>"</span><span class="p">,</span> <span class="h hc">couleur:</span><span class="s">"vert"</span><span class="p">),</span></span></div>
<div class="ln" style="top:946px"><span class="no">45</span><span class="cd">                <span class="f">Case<span class="us">_</span>speciale</span><span class="p">(</span><span class="s">"GSL"</span><span class="p">),</span></span></div>

</div>
<div class="abs" style="left:335px;top:82px;width:1px;height:965px;background:#363a4f"></div>
<div class="abs" style="left:1298px;top:82px;width:1px;height:965px;background:#363a4f"></div>
<div class="guide" style="left:368px;top:192px;height:855px"></div><div class="guide" style="left:400px;top:214px;height:44px"></div><div class="guide" style="left:400px;top:324px;height:723px"></div><div class="guide" style="left:432px;top:346px;height:154px"></div><div class="guide" style="left:432px;top:544px;height:154px"></div><div class="guide" style="left:432px;top:742px;height:154px"></div><div class="guide" style="left:432px;top:940px;height:107px"></div>
<div class="abs" style="left:1870px;top:111px;width:8px;height:704px;background:#494c60"></div>

<!-- inspection widget -->
<div class="abs" style="left:1791px;top:84px;width:89px;height:20px;background:#24273a;border-top-left-radius:5px"></div>
<svg class="ic" style="left:1799px;top:89px" width="14" height="15" viewBox="0 0 14 15" fill="none" stroke="#57a55f" stroke-linecap="round" stroke-linejoin="round"><path d="M1.500 6.200l3.300 3.300L12.300 2" stroke-width="1.800"/><path d="M1 13.500l1.800-1.500 1.800 1.500 1.800-1.500 1.800 1.500 1.800-1.500" stroke-width=".9"/></svg>
<div id="t24" class="tx" style="left:1815.6px;top:84px;font-size:13.6px;color:#b8c0e0;letter-spacing:0.000px">25</div>
<svg class="ic" style="left:1842px;top:92px" width="10" height="8" viewBox="0 0 10 8" fill="none" stroke="#ced0d6" stroke-width="1.100"><path d="M1 6.300l4-4 4 4"/></svg>
<svg class="ic" style="left:1865px;top:92px" width="10" height="8" viewBox="0 0 10 8" fill="none" stroke="#ced0d6" stroke-width="1.100"><path d="M1 2l4 4 4-4"/></svg>

<!-- fold arrow -->
<svg class="ic" style="left:318px;top:88px" width="8" height="11" viewBox="0 0 8 11" fill="none" stroke="#6e738d" stroke-width="1.100"><path d="M2.200 1.800l3.600 3.700-3.600 3.700"/></svg>

<!-- status bar -->
<div class="abs" style="left:0;top:1046px;width:1919px;height:1px;background:#262a3d"></div>
<div class="abs" style="left:14px;top:1059px;width:8px;height:8px;border:1.2px solid #5a92f5;border-radius:2px;background:#263352"></div>
<div id="t25" class="tx" style="left:26.2px;top:1050px;font-size:13.6px;letter-spacing:0.100px">MonopN’SI</div>
<svg class="ic" style="left:119px;top:1055px" width="14" height="14" viewBox="0 0 14 14.100" fill="none" stroke-width="1.05" stroke-linecap="butt" stroke-linejoin="round">
<path d="M8 4.200H1.950A1.500 1.500 0 0 0 .45 5.700V7.900A1.500 1.500 0 0 0 1.950 9.400H3.400V8.500A1.100 1.100 0 0 1 4.500 7.400H7M4.500 4.200V1.950A1.500 1.500 0 0 1 6 .45H9.100A1.500 1.500 0 0 1 10.600 1.950V3.700" stroke="#8bb5fa"/><path d="M6.100 9.300H12.050A1.500 1.500 0 0 0 13.550 7.800V5.700A1.500 1.500 0 0 0 12.050 4.200H10.650V5.300A1.100 1.100 0 0 1 9.550 6.400H7M9.600 9.300V12.150A1.500 1.500 0 0 1 8.100 13.650H4.900A1.500 1.500 0 0 1 3.400 12.150V9.400" stroke="#f7dfa8"/>
<circle cx="6.500" cy="2.500" r=".62" fill="#8bb5fa" stroke="none"/><circle cx="7.450" cy="11.400" r=".62" fill="#f7dfa8" stroke="none"/></svg>
<div id="t26" class="tx" style="left:138px;top:1050px;font-size:13.6px;letter-spacing:0.056px">plateau.py</div>
<div id="t27" class="tx" style="left:1588.2px;top:1050px;font-size:13.6px;transform:scaleX(0.7474);transform-origin:0 0">1:1</div>
<div id="t28" class="tx" style="left:1618.2px;top:1050px;font-size:13.6px;transform:scaleX(0.8694);transform-origin:0 0">CRLF</div>
<div id="t29" class="tx" style="left:1666.4px;top:1050px;font-size:13.6px;letter-spacing:0.025px">UTF-8</div>
<div id="t30" class="tx" style="left:1726.7px;top:1050px;font-size:13.6px;letter-spacing:0.114px">4 spaces</div>
<div id="t31" class="tx" style="left:1798.2px;top:1050px;font-size:13.6px;letter-spacing:-0.220px">Python 3.12</div>

</body></html>
